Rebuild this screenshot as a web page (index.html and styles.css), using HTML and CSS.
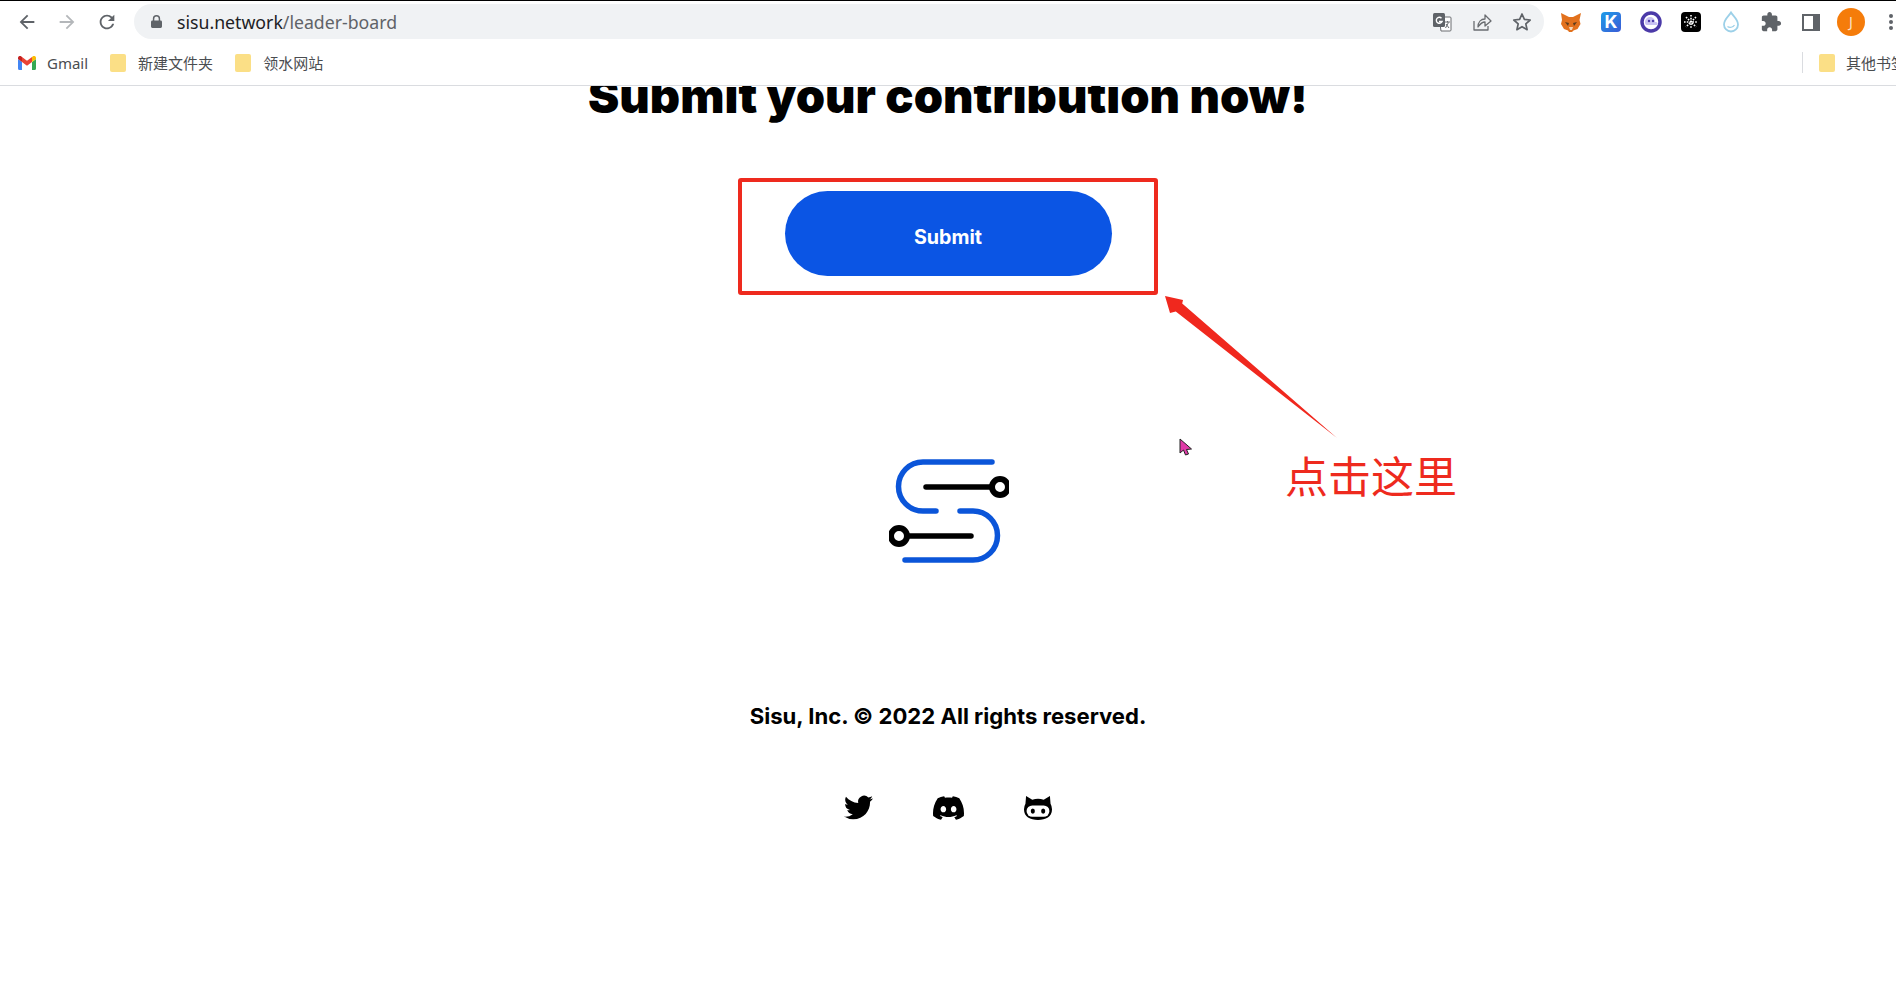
FILE: index.html
```html
<!DOCTYPE html>
<html lang="en">
<head>
    <meta charset="UTF-8">
    <meta name="viewport" content="width=device-width, initial-scale=1.0">
    <title>Sisu leader board</title>
    <link rel="stylesheet" href="styles.css">
</head>
<body>
    <!-- browser chrome -->
    <div class="toolbar">
        <div class="tool-btn">
            <svg class="icon-22" viewBox="0 0 24 24"><path fill="#5f6368" d="M20 11H7.83l5.59-5.59L12 4l-8 8 8 8 1.41-1.41L7.83 13H20v-2z"/></svg>
        </div>
        <div class="tool-btn">
            <svg class="icon-22" viewBox="0 0 24 24"><path fill="#b4b7ba" d="M4 11h12.17l-5.59-5.59L12 4l8 8-8 8-1.41-1.41L16.17 13H4v-2z"/></svg>
        </div>
        <div class="tool-btn">
            <svg class="icon-22" viewBox="0 0 24 24"><path fill="#5f6368" d="M17.65 6.35A7.958 7.958 0 0012 4c-4.42 0-7.99 3.58-7.99 8s3.57 8 7.99 8c3.73 0 6.84-2.55 7.73-6h-2.08A5.99 5.99 0 0112 18c-3.31 0-6-2.69-6-6s2.69-6 6-6c1.66 0 3.14.69 4.22 1.78L13 11h7V4l-2.35 2.35z"/></svg>
        </div>
        <div class="address-bar">
            <svg class="lock" viewBox="0 0 12 14"><path fill="#5f6368" d="M2 6V4a4 4 0 018 0v2h.5A1.5 1.5 0 0112 7.5v5a1.5 1.5 0 01-1.5 1.5h-9A1.5 1.5 0 010 12.500v-5A1.500 1.500 0 011.500 6H2zm1.600 0h4.800V4a2.400 2.400 0 00-4.800 0v2z"/></svg>
            <div class="url">sisu.network<span class="url-path">/leader-board</span></div>
            <div class="address-actions">
                <svg class="action-icon" viewBox="0 0 20 20">
                    <path d="M7 5h11a1 1 0 011 1v12a1 1 0 01-1 1H9z" fill="#fff" stroke="#6a6d71" stroke-width="1"/>
                    <rect x="1" y="1" width="12" height="14" rx="1.500" fill="#5f6368"/>
                    <path d="M9.500 6.200a3 3 0 10.600 3.300H7" fill="none" stroke="#fff" stroke-width="1.400"/>
                    <path d="M13 10h5M15.500 9v1.500M13.500 16l3-5.500M14 12l3 4" fill="none" stroke="#6a6d71" stroke-width="1"/>
                </svg>
                <svg class="action-icon" viewBox="0 0 20 20">
                    <path d="M2 9v9h14v-4M6 15c0-5 3-8 7-8V3l6 6-6 5v-4c-3 0-5 2-7 5z" fill="none" stroke="#6a6d71" stroke-width="1.300" stroke-linejoin="round"/>
                </svg>
                <svg class="action-icon" viewBox="0 0 20 20">
                    <path d="M10 2l2.400 5.400 5.800.6-4.400 3.900 1.300 5.800-5.100-3-5.100 3 1.300-5.800L1.800 8l5.800-.6z" fill="none" stroke="#5f6368" stroke-width="1.700" stroke-linejoin="round"/>
                </svg>
            </div>
        </div>
        <div class="ext-list">
            <div class="tool-btn">
                <svg class="icon-22" viewBox="0 0 22 22">
                    <path d="M1 2l8 4h4l8-4-1.500 7 1 4-3 5-4 1.500-1.500 1.500h-3L8 19.500 4 18l-3-5 1-4z" fill="#e2711d"/>
                    <path d="M5 11l4 1-1 3zM17 11l-4 1 1 3z" fill="#5c3c1e"/>
                    <path d="M9 16h4l-1 3h-2z" fill="#f3d6b8"/>
                </svg>
            </div>
            <div class="tool-btn">
                <div class="k-tile">K</div>
            </div>
            <div class="tool-btn">
                <svg class="icon-22" viewBox="0 0 22 22">
                    <circle cx="11" cy="11" r="9" fill="#fff" stroke="#4b3aa8" stroke-width="3.500"/>
                    <path d="M5 11a5 5 0 0110 0c3 0 3 2 2 3H7c-1.500 0-2-1-2-3z" fill="#c9c2f2"/>
                    <circle cx="9" cy="10" r="1.200" fill="#4b3aa8"/>
                    <circle cx="13" cy="10" r="1.200" fill="#4b3aa8"/>
                </svg>
            </div>
            <div class="tool-btn">
                <svg class="icon-22" viewBox="0 0 22 22">
                    <rect x="1" y="1" width="20" height="20" rx="4" fill="#000"/>
                    <g stroke="#fff" stroke-width="1.600" stroke-dasharray="1.600 1.200">
                        <path d="M11 4v14M4 11h14M6 6l10 10M16 6L6 16"/>
                    </g>
                </svg>
            </div>
            <div class="tool-btn">
                <svg class="icon-22" viewBox="0 0 22 22">
                    <path d="M11 1.500c2 3.500 7 7 7 12a7 7 0 01-14 0c0-5 5-8.500 7-12z" fill="#fff" stroke="#9cd0e8" stroke-width="1.800"/>
                    <path d="M7.500 15.500c2 1.500 5.500 1 7-1.500" fill="none" stroke="#9cd0e8" stroke-width="1.200"/>
                </svg>
            </div>
            <div class="tool-btn">
                <svg class="icon-22" viewBox="0 0 24 24"><path fill="#5f6368" d="M20.500 11H19V7c0-1.100-.9-2-2-2h-4V3.500C13 2.120 11.880 1 10.500 1S8 2.120 8 3.500V5H4c-1.100 0-1.990.9-1.990 2v3.800H3.500c1.490 0 2.700 1.210 2.700 2.700s-1.210 2.700-2.700 2.700H2V20c0 1.100.9 2 2 2h3.800v-1.500c0-1.490 1.210-2.700 2.700-2.700 1.490 0 2.700 1.210 2.700 2.700V22H17c1.100 0 2-.9 2-2v-4h1.500c1.380 0 2.500-1.120 2.500-2.500S21.880 11 20.500 11z"/></svg>
            </div>
            <div class="tool-btn">
                <div class="side-panel"></div>
            </div>
            <div class="tool-btn">
                <div class="avatar">J</div>
            </div>
            <div class="tool-btn">
                <div class="dots"></div>
            </div>
        </div>
    </div>

    <div class="bookmarks">
        <div class="bookmark">
            <svg class="gmail" viewBox="0 0 18 14">
                <path d="M0 3v9.500A1.500 1.500 0 001.500 14H4V6z" fill="#4285f4"/>
                <path d="M14 6v8h2.500a1.500 1.500 0 001.500-1.500V3z" fill="#34a853"/>
                <path d="M4 6l5 3.800L14 6V1l-5 3.800L4 1z" fill="#ea4335"/>
                <path d="M0 3l4 3V1L3 .3C1.700-.6 0 .3 0 2z" fill="#c5221f"/>
                <path d="M14 1v5l4-3V2c0-1.700-1.700-2.600-3-1.700z" fill="#fbbc04"/>
            </svg>
            <span>Gmail</span>
        </div>
        <div class="bookmark">
            <div class="folder"></div>
            <span>新建文件夹</span>
        </div>
        <div class="bookmark">
            <div class="folder"></div>
            <span>领水网站</span>
        </div>
        <div class="bookmark other-books">
            <div class="folder"></div>
            <span>其他书签</span>
        </div>
    </div>

    <!-- page content, scrolled so the heading is cut by the toolbar -->
    <div class="page">
        <h1 class="page-title">Submit your contribution now!</h1>

        <div class="submit-wrap">
            <div class="submit-btn">Submit</div>
            <div class="red-frame"></div>
        </div>

        <svg class="logo" viewBox="0 0 120 120">
            <g fill="none" stroke-linecap="round">
                <path stroke="#0b55d9" stroke-width="5.500" d="M103 10H34a24.500 24.500 0 000 49h13"/>
                <path stroke="#0b55d9" stroke-width="5.500" d="M71 59h13a24.500 24.500 0 010 49H16"/>
                <path stroke="#000" stroke-width="5.500" d="M37 35h66"/>
                <circle stroke="#000" stroke-width="6" cx="111" cy="35" r="8"/>
                <path stroke="#000" stroke-width="5.500" d="M82 84H18"/>
                <circle stroke="#000" stroke-width="6" cx="10" cy="84" r="8"/>
            </g>
        </svg>

        <div class="copyright">Sisu, Inc. © 2022 All rights reserved.</div>

        <div class="social">
            <svg class="twitter" viewBox="0 0 24 24"><path d="M23.953 4.570a10 10 0 01-2.825.775 4.958 4.958 0 002.163-2.723c-.951.555-2.005.959-3.127 1.184a4.920 4.920 0 00-8.384 4.482C7.690 8.095 4.067 6.130 1.640 3.162a4.822 4.822 0 00-.666 2.475c0 1.710.870 3.213 2.188 4.096a4.904 4.904 0 01-2.228-.616v.060a4.923 4.923 0 003.946 4.827 4.996 4.996 0 01-2.212.085 4.936 4.936 0 004.604 3.417 9.867 9.867 0 01-6.102 2.105c-.390 0-.779-.023-1.170-.067a13.995 13.995 0 007.557 2.209c9.053 0 13.998-7.496 13.998-13.985 0-.210 0-.420-.015-.630A9.935 9.935 0 0024 4.590z"/></svg>
            <svg class="discord" viewBox="0 0 24 18.400"><path transform="translate(0 -2.800)" d="M20.317 4.370a19.790 19.790 0 00-4.885-1.515.074.074 0 00-.079.037c-.211.375-.445.865-.608 1.250-1.845-.276-3.680-.276-5.487 0-.164-.393-.406-.874-.618-1.250a.077.077 0 00-.079-.037 19.740 19.740 0 00-4.885 1.515.070.070 0 00-.032.028C.533 9.046-.319 13.580.099 18.058a.082.082 0 00.031.056c2.053 1.508 4.041 2.423 5.993 3.030a.078.078 0 00.084-.028c.462-.630.873-1.295 1.226-1.994a.076.076 0 00-.042-.106c-.653-.248-1.274-.550-1.872-.892a.077.077 0 01-.008-.128c.126-.094.252-.192.372-.291a.074.074 0 01.078-.011c3.928 1.793 8.180 1.793 12.061 0a.074.074 0 01.079.010c.120.099.246.198.373.292a.077.077 0 01-.007.128 12.300 12.300 0 01-1.873.891.077.077 0 00-.041.107c.360.698.772 1.363 1.225 1.993a.076.076 0 00.084.029c1.961-.607 3.950-1.522 6.002-3.029a.077.077 0 00.031-.055c.500-5.177-.838-9.674-3.548-13.660a.061.061 0 00-.031-.029zM8.020 15.331c-1.183 0-2.157-1.086-2.157-2.419 0-1.333.956-2.419 2.157-2.419 1.211 0 2.176 1.095 2.157 2.419 0 1.333-.956 2.419-2.157 2.419zm7.975 0c-1.183 0-2.157-1.086-2.157-2.419 0-1.333.955-2.419 2.157-2.419 1.211 0 2.176 1.095 2.157 2.419 0 1.333-.946 2.419-2.157 2.419z"/></svg>
            <svg class="github" viewBox="0 0 27 23">
                <path d="M2 0l6 3.500a16 16 0 0111 0L25 0l.6 7.500A11 11 0 0127 13c0 7-6 10-13.500 10S0 20 0 13a11 11 0 011.400-5.500z"/>
                <rect x="2.500" y="9" width="22" height="11" rx="5.500" fill="#fff"/>
                <ellipse cx="8.500" cy="14.500" rx="2" ry="2.500"/>
                <ellipse cx="18.500" cy="14.500" rx="2" ry="2.500"/>
            </svg>
        </div>
    </div>

    <!-- annotations drawn over the screenshot -->
    <svg class="red-arrow" viewBox="0 0 180 150">
        <path fill="#f0281e" d="M4 5l18 4-.8 3.600L176 147 14.800 20.400 9 22z"/>
    </svg>
    <div class="red-label">点击这里</div>
    <svg class="mouse-cursor" viewBox="0 0 14 18">
        <path d="M1 1v14l3.500-3 2 5 3-1-2-4.500 5-.5z" fill="#e03aa8" stroke="#222" stroke-width="1"/>
    </svg>
</body>
</html>
```

FILE: styles.css
```css
:root {
    --chrome-grey: #5f6368;
    --omnibox: #f0f2f4;
    --annotation: #ee2a1e;
    --sisu-blue: #0b55e4;
}

body {
    margin: 0;
    background: #fff;
    color: #000;
    font-family: 'Inter', 'Liberation Sans', sans-serif;
    height: 986px;
    overflow: hidden;
    position: relative;
}

/* browser toolbar */
.toolbar {
    display: flex;
    align-items: center;
    height: 42px;
    border-top: 1px solid #000;
    padding-left: 7px;
}

.tool-btn {
    flex: none;
    width: 40px;
    height: 35px;
    display: flex;
    align-items: center;
    justify-content: center;
}

.icon-22 {
    width: 22px;
    height: 22px;
}

.address-bar {
    flex: none;
    box-sizing: border-box;
    width: 1410px;
    height: 35px;
    margin-left: 7px;
    margin-top: -1px;
    padding-left: 17px;
    display: flex;
    align-items: center;
    background: var(--omnibox);
    border-radius: 18px;
}

.lock {
    width: 11px;
    height: 13px;
}

.url {
    margin-left: 15px;
    font-family: 'Noto Sans', sans-serif;
    font-size: 17.7px;
    color: #202124;
}

.url-path {
    color: var(--chrome-grey);
}

.address-actions {
    margin-left: auto;
    margin-right: 12px;
    display: flex;
    gap: 20px;
}

.action-icon {
    width: 20px;
    height: 20px;
}

.ext-list {
    flex: none;
    display: flex;
    margin-left: 7px;
}

.k-tile {
    width: 20px;
    height: 20px;
    border-radius: 4px;
    background: linear-gradient(135deg, #1f9ce8, #3a5bd6);
    color: #fff;
    font-size: 18px;
    font-weight: 700;
    line-height: 20px;
    text-align: center;
}

.side-panel {
    box-sizing: border-box;
    width: 18px;
    height: 17px;
    border: 2px solid var(--chrome-grey);
    border-right-width: 7px;
}

.avatar {
    width: 28px;
    height: 28px;
    border-radius: 50%;
    background: #f57c0a;
    color: #fbe3c8;
    font-family: 'Noto Sans', sans-serif;
    font-size: 14px;
    line-height: 28px;
    text-align: center;
}

.dots {
    width: 4px;
    height: 4px;
    border-radius: 50%;
    background: var(--chrome-grey);
    box-shadow: 0 -6px 0 var(--chrome-grey), 0 6px 0 var(--chrome-grey);
}

/* bookmarks bar */
.bookmarks {
    display: flex;
    align-items: center;
    height: 39px;
    padding-left: 18px;
    padding-bottom: 3px;
    border-bottom: 1px solid #dadce0;
    font-family: 'Noto Sans', 'Noto Sans CJK SC', sans-serif;
    font-size: 15px;
    color: #4a4d50;
}

.bookmark {
    flex: none;
    display: flex;
    align-items: center;
    gap: 12px;
    margin-right: 22px;
}

.gmail {
    width: 18px;
    height: 14px;
    margin-right: -1px;
}

.folder {
    width: 16px;
    height: 18px;
    background: #fbdf86;
    border-radius: 2px;
}

.other-books {
    margin-left: auto;
    margin-right: -10px;
    padding-left: 16px;
    border-left: 1px solid #dadce0;
    gap: 11px;
}

/* page */
.page {
    height: 900px;
    overflow: hidden;
    display: flex;
    flex-direction: column;
    align-items: center;
}

.page-title {
    margin: -20px 0 0;
    font-size: 47px;
    line-height: 60px;
    font-weight: 900;
    white-space: nowrap;
}

.submit-wrap {
    position: relative;
    margin-top: 65px;
}

.submit-btn {
    width: 327px;
    height: 85px;
    border-radius: 43px;
    background: var(--sisu-blue);
    color: #fff;
    font-size: 19.7px;
    font-weight: 700;
    line-height: 93px;
    text-align: center;
}

.red-frame {
    position: absolute;
    top: -13px;
    left: -47px;
    right: -46px;
    bottom: -19px;
    border: 4px solid var(--annotation);
    border-radius: 3px;
}

.logo {
    width: 120px;
    height: 120px;
    margin-top: 176px;
    margin-left: 2px;
}

.copyright {
    margin-top: 129px;
    font-size: 22.1px;
    font-weight: 700;
    line-height: 30px;
}

.social {
    display: flex;
    align-items: center;
    gap: 60px;
    margin-top: 62px;
}

.twitter {
    width: 29px;
    height: 29px;
}

.discord {
    width: 31px;
    height: 24px;
}

.github {
    width: 28px;
    height: 24px;
}

/* red annotations */
.red-arrow {
    position: absolute;
    left: 1161px;
    top: 291px;
    width: 180px;
    height: 150px;
}

.red-label {
    position: absolute;
    left: 1285px;
    top: 444px;
    font-family: 'Noto Sans CJK SC', sans-serif;
    font-size: 43px;
    line-height: 60px;
    color: var(--annotation);
}

.mouse-cursor {
    position: absolute;
    left: 1179px;
    top: 438px;
    width: 14px;
    height: 18px;
}
```
